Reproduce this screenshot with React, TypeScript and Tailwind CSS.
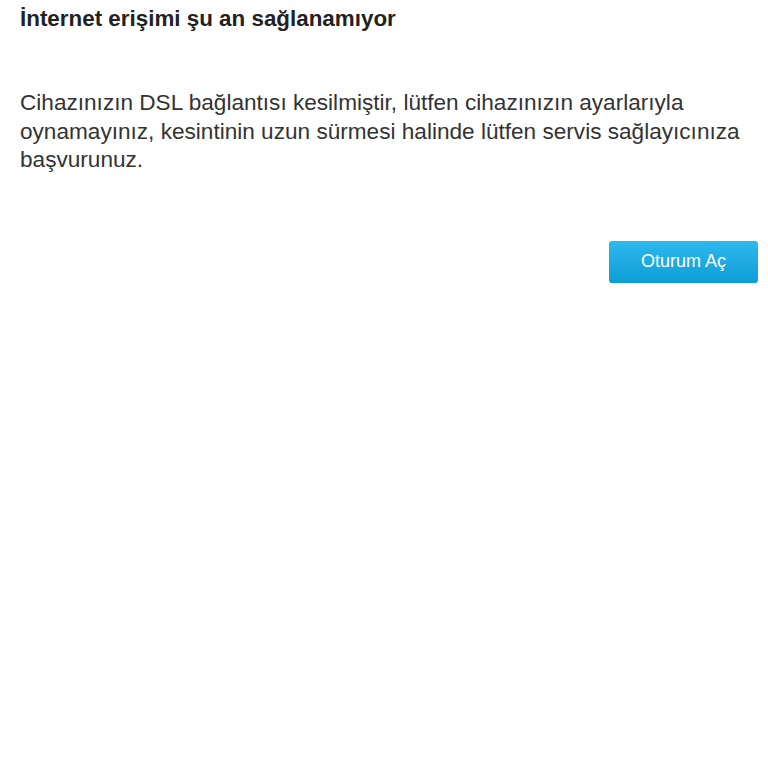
export default function App() {
  return (
    <div className="min-h-[768px] bg-white pl-5 pr-[10px] font-['Liberation_Sans',Arial,sans-serif] text-[#333333]">
      <h1 className="pt-[4px] text-[22.4px] font-bold leading-[30px] text-[#222222]">
        İnternet erişimi şu an sağlanamıyor
      </h1>
      <p className="mt-[55px] pr-[10px] text-[22.6px] leading-[28.5px]">
        Cihazınızın DSL bağlantısı kesilmiştir, lütfen cihazınızın ayarlarıyla oynamayınız, kesintinin uzun sürmesi halinde lütfen servis sağlayıcınıza başvurunuz.
      </p>
      <div className="mt-[66px] flex justify-end">
        <button className="h-[42px] w-[149px] rounded-[3px] bg-gradient-to-b from-[#2cb9ee] to-[#0c9dd6] text-[18px] text-white">
          Oturum Aç
        </button>
      </div>
    </div>
  );
}
